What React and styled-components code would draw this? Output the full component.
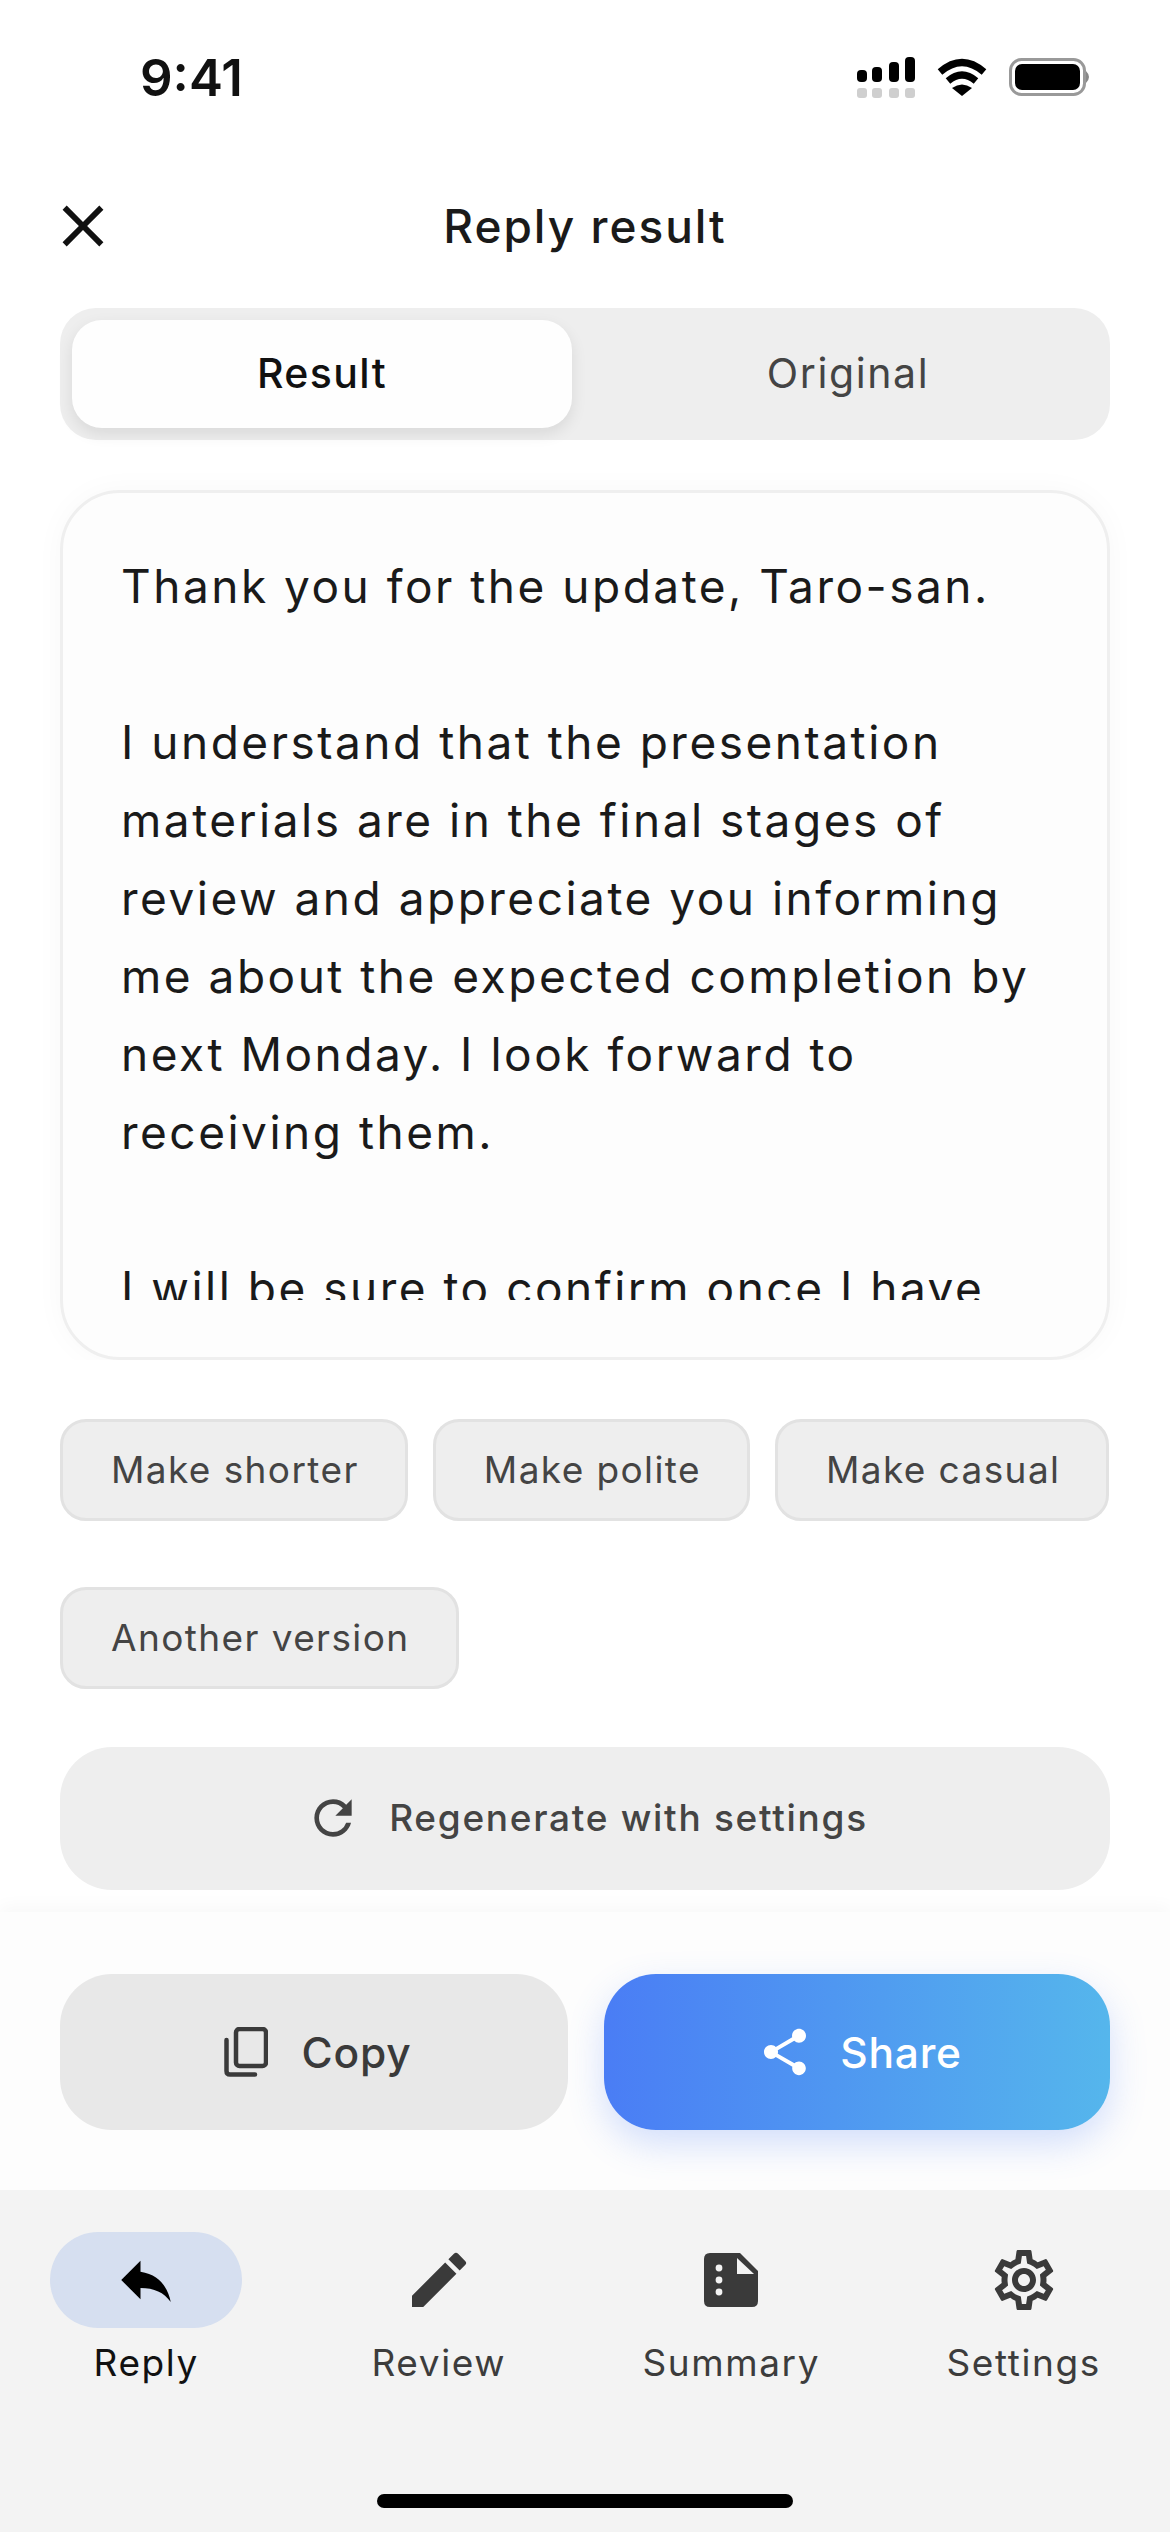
import React from 'react';
import styled, { createGlobalStyle } from 'styled-components';
import { MdClose, MdRefresh, MdShare, MdReply, MdEdit, MdOutlineSettings } from 'react-icons/md';

const GlobalStyles = createGlobalStyle`
  * { box-sizing: border-box; }
  body {
    margin: 0;
    background: #ffffff;
    font-family: Inter, "Noto Sans", sans-serif;
  }
`;

const Screen = styled.div`
  width: 1170px;
  height: 2532px;
  display: flex;
  flex-direction: column;
  overflow: hidden;
  background: #ffffff;
`;

const StatusBar = styled.div`
  height: 154px;
  flex: none;
  display: flex;
  align-items: center;
  justify-content: space-between;
  padding: 0 79px 0 140px;
`;

const Time = styled.div`
  font-size: 51px;
  font-weight: 600;
  color: #111111;
`;

const StatusIcons = styled.div`
  display: flex;
  align-items: center;
  gap: 22px;
`;

const Header = styled.div`
  position: relative;
  height: 144px;
  flex: none;
  display: flex;
  align-items: center;
  justify-content: center;
`;

const CloseButton = styled.div`
  position: absolute;
  left: 48px;
  top: 50%;
  transform: translateY(-50%);
  display: flex;
  color: #111111;
`;

const Title = styled.h1`
  margin: 0;
  font-size: 46px;
  font-weight: 500;
  letter-spacing: 2px;
  color: #1a1a1a;
`;

const Content = styled.div`
  flex: 1;
  padding: 10px 60px 0;
  display: flex;
  flex-direction: column;
`;

const Segmented = styled.div`
  height: 132px;
  flex: none;
  border-radius: 36px;
  background: #eeeeee;
  padding: 12px;
  display: flex;
  gap: 26px;
`;

const Segment = styled.div`
  flex: 1;
  display: flex;
  align-items: center;
  justify-content: center;
  padding-bottom: 3px;
  border-radius: 30px;
  font-size: 41px;
  letter-spacing: ${(p) => (p.$active ? '1.4px' : '1.6px')};
  font-weight: ${(p) => (p.$active ? 500 : 400)};
  color: ${(p) => (p.$active ? '#111111' : '#444444')};
  background: ${(p) => (p.$active ? '#fefefe' : 'transparent')};
  box-shadow: ${(p) => (p.$active ? '0 6px 16px rgba(0, 0, 0, 0.09)' : 'none')};
`;

/* the card's shadow gets cut at the bottom, like a scroll area */
const CardViewport = styled.div`
  margin: 26px -40px 0;
  padding: 24px 40px 0;
  flex: none;
  overflow: hidden;
`;

const ResultCard = styled.div`
  height: 870px;
  border-radius: 60px;
  border: 3px solid #efefef;
  background: #fdfdfd;
  padding: 54px 58px 57px;
  box-shadow: 0 0 30px rgba(0, 0, 0, 0.03);
`;

const ResultText = styled.div`
  height: 100%;
  overflow: hidden;
  font-size: 46px;
  line-height: 78px;
  letter-spacing: 2.5px;
  color: #1a1a1a;
  white-space: pre-line;
`;

const Chips = styled.div`
  margin-top: 59px;
  display: flex;
  flex-wrap: wrap;
  column-gap: 25px;
  row-gap: 66px;
`;

const Chip = styled.div`
  height: 102px;
  padding: 0 46px 2px 48px;
  display: flex;
  align-items: center;
  border-radius: 26px;
  border: 3px solid #e2e2e2;
  background: #eeeeee;
  font-size: 37px;
  letter-spacing: 1.4px;
  color: #444444;
`;

const RegenerateButton = styled.div`
  margin-top: 58px;
  height: 143px;
  flex: none;
  padding: 0 0 2px 3px;
  border-radius: 52px;
  background: #eeeeee;
  display: flex;
  align-items: center;
  justify-content: center;
  gap: 28px;
  font-size: 37px;
  font-weight: 500;
  letter-spacing: 1.7px;
  color: #444444;
`;

const ActionPanel = styled.div`
  height: 278px;
  flex: none;
  padding: 62px 60px 0;
  background: #fdfdfd;
  box-shadow: 0 -6px 16px rgba(0, 0, 0, 0.03);
  display: flex;
  gap: 36px;
  align-items: flex-start;
`;

const ActionButton = styled.div`
  flex: 1;
  height: 156px;
  padding-left: ${(p) => (p.$primary ? '5px' : '7px')};
  border-radius: 52px;
  display: flex;
  align-items: center;
  justify-content: center;
  gap: ${(p) => (p.$primary ? '27px' : '34px')};
  font-size: 42.5px;
  font-weight: 500;
  letter-spacing: 0.8px;
  color: ${(p) => (p.$primary ? '#ffffff' : '#3a3a3a')};
  background: ${(p) => (p.$primary ? 'linear-gradient(90deg, #4a7df5, #55b6ec)' : '#e8e8e8')};
  box-shadow: ${(p) => (p.$primary ? '0 14px 36px rgba(74, 125, 245, 0.24)' : 'none')};
`;

const TabBar = styled.div`
  position: relative;
  height: 342px;
  flex: none;
  background: #f3f3f3;
  display: grid;
  grid-template-columns: repeat(4, 1fr);
  padding: 42px 0 0;
  align-items: start;
`;

const Tab = styled.div`
  display: flex;
  flex-direction: column;
  align-items: center;
  gap: 12px;
  font-size: 37px;
  letter-spacing: 1.6px;
  color: ${(p) => (p.$active ? '#111111' : '#3c3c3c')};
`;

const TabIcon = styled.div`
  width: 192px;
  height: 96px;
  border-radius: 48px;
  display: flex;
  align-items: center;
  justify-content: center;
  background: ${(p) => (p.$active ? '#d6dff0' : 'transparent')};
  color: ${(p) => (p.$active ? '#000000' : '#3a3a3a')};
`;

const HomeIndicator = styled.div`
  position: absolute;
  left: 377px;
  bottom: 24px;
  width: 416px;
  height: 14px;
  border-radius: 7px;
  background: #000000;
`;

function SignalIcon() {
  return (
    <svg width="58" height="41" viewBox="0 0 58 41">
      <rect x="0" y="13" width="10" height="12" rx="4" fill="#000" />
      <rect x="15" y="10" width="10" height="15" rx="4" fill="#000" />
      <rect x="32" y="5" width="10" height="20" rx="4" fill="#000" />
      <rect x="48" y="0" width="10" height="25" rx="4" fill="#000" />
      <rect x="0" y="31" width="10" height="10" rx="3" fill="#cfcfcf" />
      <rect x="15" y="31" width="10" height="10" rx="3" fill="#cfcfcf" />
      <rect x="32" y="31" width="10" height="10" rx="3" fill="#cfcfcf" />
      <rect x="48" y="31" width="10" height="10" rx="3" fill="#cfcfcf" />
    </svg>
  );
}

function WifiIcon() {
  return (
    <svg width="50" height="38" viewBox="0 0 50 38">
      <path d="M3 14 Q25 -5 47 14" fill="none" stroke="#000" strokeWidth="7" />
      <path d="M11 23 Q25 11 39 23" fill="none" stroke="#000" strokeWidth="7" />
      <path d="M25 38 L15 30 Q25 23 35 30 Z" fill="#000" />
    </svg>
  );
}

function BatteryIcon() {
  return (
    <svg width="82" height="38" viewBox="0 0 82 38">
      <rect x="1.5" y="1.5" width="74" height="35" rx="11" fill="none" stroke="#999" strokeWidth="3" />
      <rect x="6" y="6" width="65" height="26" rx="7" fill="#000" />
      <path d="M77 13 Q83 19 77 25 Z" fill="#888" />
    </svg>
  );
}

function CopyIcon() {
  return (
    <svg width="44" height="50" viewBox="0 0 44 50" fill="none" stroke="#3a3a3a">
      <rect x="12" y="2" width="30" height="37" rx="3.5" strokeWidth="4.5" />
      <path d="M2.5 13 V44 Q2.5 47.5 6 47.5 H31" strokeWidth="4.5" strokeLinecap="round" />
    </svg>
  );
}

function SummaryIcon() {
  return (
    <svg width="54" height="54" viewBox="0 0 54 54">
      <path d="M6 0 H36 L54 18 V48 Q54 54 48 54 H6 Q0 54 0 48 V6 Q0 0 6 0 Z" fill="#3a3a3a" />
      <path d="M33 5 L50 21 H33 Z" fill="#f3f3f3" />
      <circle cx="15" cy="15" r="3.4" fill="#f3f3f3" />
      <circle cx="15" cy="27" r="3.4" fill="#f3f3f3" />
      <circle cx="15" cy="39" r="3.4" fill="#f3f3f3" />
    </svg>
  );
}

const tabs = [
  { label: 'Reply', icon: <MdReply size={66} />, active: true },
  { label: 'Review', icon: <MdEdit size={72} /> },
  { label: 'Summary', icon: <SummaryIcon /> },
  { label: 'Settings', icon: <MdOutlineSettings size={72} /> },
];

const resultText = `Thank you for the update, Taro-san.

I understand that the presentation materials are in the final stages of review and appreciate you informing me about the expected completion by next Monday. I look forward to receiving them.

I will be sure to confirm once I have received them.`;

function App() {
  return (
    <Screen>
      <GlobalStyles />
      <StatusBar>
        <Time>9:41</Time>
        <StatusIcons>
          <SignalIcon />
          <WifiIcon />
          <BatteryIcon />
        </StatusIcons>
      </StatusBar>
      <Header>
        <CloseButton>
          <MdClose size={70} />
        </CloseButton>
        <Title>Reply result</Title>
      </Header>
      <Content>
        <Segmented>
          <Segment $active>Result</Segment>
          <Segment>Original</Segment>
        </Segmented>
        <CardViewport>
          <ResultCard>
            <ResultText>{resultText}</ResultText>
          </ResultCard>
        </CardViewport>
        <Chips>
          <Chip>Make shorter</Chip>
          <Chip>Make polite</Chip>
          <Chip>Make casual</Chip>
          <Chip>Another version</Chip>
        </Chips>
        <RegenerateButton>
          <MdRefresh size={56} />
          Regenerate with settings
        </RegenerateButton>
      </Content>
      <ActionPanel>
        <ActionButton>
          <CopyIcon />
          Copy
        </ActionButton>
        <ActionButton $primary>
          <MdShare size={56} />
          Share
        </ActionButton>
      </ActionPanel>
      <TabBar>
        {tabs.map((tab) => (
          <Tab key={tab.label} $active={tab.active}>
            <TabIcon $active={tab.active}>{tab.icon}</TabIcon>
            {tab.label}
          </Tab>
        ))}
        <HomeIndicator />
      </TabBar>
    </Screen>
  );
}

export default App;
